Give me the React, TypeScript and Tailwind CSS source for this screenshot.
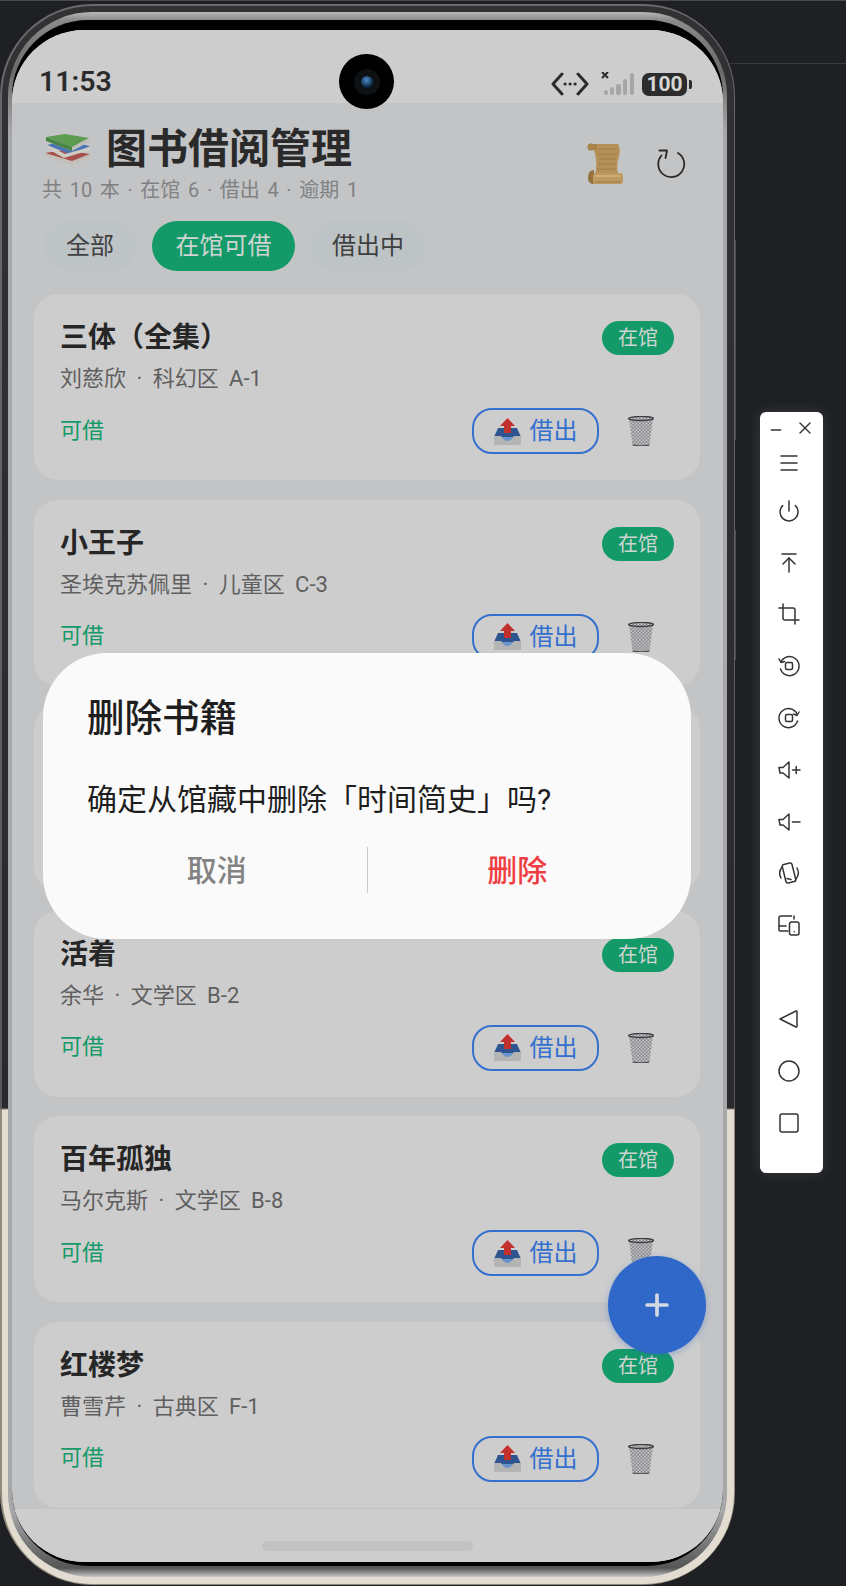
import React, { FC } from "react";
import { ArrowUpToLine, Circle, Crop, Menu, Minus, Plus, Power, Square, X } from "lucide-react";

interface Book {
  title: string;
  meta: string;
}

const topBooks: Book[] = [
  { title: "三体（全集）", meta: "刘慈欣 · 科幻区 A-1" },
  { title: "小王子", meta: "圣埃克苏佩里 · 儿童区 C-3" },
];

const bottomBooks: Book[] = [
  { title: "活着", meta: "余华 · 文学区 B-2" },
  { title: "百年孤独", meta: "马尔克斯 · 文学区 B-8" },
  { title: "红楼梦", meta: "曹雪芹 · 古典区 F-1" },
];

// no emoji font in the sandbox, so these four are drawn
const BooksEmoji = () => (
  <svg width="48" height="34" viewBox="14 9 48 34">
    <path d="M15 30 L34 27 L60 31 L42 41 Z" fill="#a8504c" />
    <path d="M15 30 L15 33 L42 42 L60 34 L60 31 L42 38 Z" fill="#c4bfb6" />
    <path d="M17 22 L35 18 L60 23 L42 32 Z" fill="#4a75b5" />
    <path d="M17 22 L18 26 L34 35 L60 27 L60 24 L35 31 Z" fill="#cfccc6" />
    <path d="M16 14 L35 11 L59 15 L42 24 Z" fill="#5c9c50" />
    <path d="M16 14 L16 18 L42 28 L59 19 L59 15 L42 24 Z" fill="#c0beb4" />
    <path d="M16 18 L42 28 L42 24 L16 14 Z" fill="#4a8445" />
  </svg>
);

const ScrollEmoji = () => (
  <svg width="36" height="43" viewBox="0 0 36 43">
    <path d="M6 2 L31 2 Q34 8 32 14 Q29 24 31 32 L8 34 Q11 20 7 8 Z" fill="#b59058" />
    <path d="M11 7 H29 M11 12 H30 M12 17 H29 M11 22 H28 M10 27 H28" stroke="#9a7a48" strokeWidth="0.8" />
    <circle cx="4" cy="5" r="3.5" fill="#96723e" />
    <path d="M1 2 H10 V8 H1 Z" fill="#a9834c" />
    <path d="M1 36 Q1 28 7 28 L7 42 Q1 42 1 36 Z" fill="#96723e" />
    <rect x="6" y="31" width="30" height="11" rx="3" fill="#bd9a62" />
    <path d="M8 34 H33" stroke="#d4b27a" strokeWidth="1.5" />
    <path d="M8 40 H34" stroke="#9c7b48" strokeWidth="1" />
  </svg>
);

const OutboxEmoji = () => (
  <svg width="27" height="27" viewBox="0 0 27 27" className="shrink-0">
    <path d="M0 19 L4 10 H23 L27 19 V27 H0 Z" fill="#2f5590" />
    <path d="M4 19 H23 Q19 25 13.5 25 Q8 25 4 19 Z" fill="#6c94cc" />
    <path d="M0 18 H7 Q10 23 13.5 23 Q17 23 20 18 H27 V27 H0 Z" fill="#b4b4b4" />
    <path d="M13.5 0 L21 8 H17 V15 H10 V8 H6 Z" fill="#c2302e" />
  </svg>
);

const TrashEmoji = () => (
  <svg width="26" height="30" viewBox="0 0 26 30">
    <defs>
      <pattern id="mesh" width="2.4" height="2.4" patternUnits="userSpaceOnUse" patternTransform="rotate(45)">
        <rect width="2.4" height="2.4" fill="#c4c4c6" />
        <path d="M0 0 H2.4 M0 0 V2.4" stroke="#66666a" strokeWidth="0.9" />
      </pattern>
    </defs>
    <path d="M1 2 H25 L21.5 29 Q13 30.5 4.5 29 Z" fill="url(#mesh)" />
    <path d="M4.5 29 Q13 30.5 21.5 29" stroke="#4c4c52" strokeWidth="1.2" fill="none" />
    <ellipse cx="13" cy="2.5" rx="12.5" ry="2" fill="none" stroke="#3c3c42" strokeWidth="1.4" />
  </svg>
);

const BookCard: FC<Book> = ({ title, meta }) => (
  <div className="h-[186px] shrink-0 rounded-[24px] bg-[#cdcdcd] px-[26px] pt-[27px]">
    <div className="flex h-[34px] items-center justify-between">
      <span className="text-[28px] font-bold leading-[34px] text-[#262626]">{title}</span>
      <span className="flex h-[34px] w-[72px] items-center justify-center rounded-full bg-[#149a68] text-[20px] text-[#d0d4d2]">
        在馆
      </span>
    </div>
    <p className="mt-[9px] h-[30px] text-[22px] leading-[30px] text-[#5f5f5f] [word-spacing:5px]">{meta}</p>
    <div className="mt-[14px] flex h-[46px] items-center justify-between pr-[20px]">
      <span className="pb-[2px] text-[22px] text-[#149a68]">可借</span>
      <div className="flex items-center gap-[29px]">
        <button className="flex h-[46px] w-[127px] items-center justify-center gap-[9px] rounded-[20px] border-2 border-[#3570cf] text-[24px] text-[#3570cf]">
          <OutboxEmoji />
          借出
        </button>
        <TrashEmoji />
      </div>
    </div>
  </div>
);

const SideIcon: FC<{ children: React.ReactNode }> = ({ children }) => (
  <div className="flex h-[51.8px] items-center justify-center pr-[5px] text-[#333333]">{children}</div>
);

const Glyph: FC<{ children: React.ReactNode }> = ({ children }) => (
  <svg width="24" height="24" viewBox="0 0 24 24" fill="none" stroke="currentColor" strokeWidth="1.5" strokeLinecap="round" strokeLinejoin="round">
    {children}
  </svg>
);

const SideToolbar = () => (
  <div className="absolute left-[760px] top-[412px] flex h-[761px] w-[63px] flex-col rounded-[6px] bg-white shadow-[0_0_14px_rgba(255,255,255,0.12)]">
    <div className="flex h-[29px] items-end justify-center gap-[11px] pb-[3px] text-[#333333]">
      <Minus size={16} strokeWidth={2} />
      <X size={20} strokeWidth={1.6} />
    </div>
    <div className="flex h-[44px] items-center justify-center pr-[5px] text-[#333333]">
      <Menu size={24} strokeWidth={1.5} />
    </div>
    <SideIcon>
      <Power size={24} strokeWidth={1.5} />
    </SideIcon>
    <SideIcon>
      <ArrowUpToLine size={24} strokeWidth={1.5} />
    </SideIcon>
    <SideIcon>
      <Crop size={24} strokeWidth={1.5} />
    </SideIcon>
    <SideIcon>
      <Glyph>
        <rect x="8.5" y="8.5" width="7" height="7" rx="1.5" />
        <path d="M4 8 A9.5 9.5 0 1 1 3.5 15" />
        <path d="M2 5 L4 8.5 L7.5 7.5" />
      </Glyph>
    </SideIcon>
    <SideIcon>
      <Glyph>
        <rect x="8.5" y="8.5" width="7" height="7" rx="1.5" />
        <path d="M20 8 A9.5 9.5 0 1 0 20.5 15" />
        <path d="M22 6 L20 9.5 L16.5 8" />
      </Glyph>
    </SideIcon>
    <SideIcon>
      <Glyph>
        <path d="M2 9.5 H6 L12 4 V20 L6 15 H3 Z" />
        <path d="M15.5 12 H23 M19.2 8.5 V15.5" />
      </Glyph>
    </SideIcon>
    <SideIcon>
      <Glyph>
        <path d="M2 9.5 H6 L12 4 V20 L6 15 H3 Z" />
        <path d="M15.5 12 H23" />
      </Glyph>
    </SideIcon>
    <SideIcon>
      <Glyph>
        <rect x="7" y="2.5" width="10" height="19" rx="2" transform="rotate(-14 12 12)" />
        <path d="M10 17.5 L14 18.5" />
        <path d="M5 6 A10 10 0 0 0 4 17 M19 18 A10 10 0 0 0 20 7" />
      </Glyph>
    </SideIcon>
    <SideIcon>
      <Glyph>
        <path d="M14.5 3 H4 A2 2 0 0 0 2 5 V17 A1 1 0 0 0 3 18 H11" />
        <path d="M2 13 H9" />
        <path d="M17 6 V3" />
        <rect x="12.5" y="9" width="9.5" height="13" rx="2" />
        <path d="M17.3 18.8 H17.3" />
      </Glyph>
    </SideIcon>
    <div className="h-[42px]" />
    <SideIcon>
      <Glyph>
        <path d="M3 12 L19 4 Q20 3.8 20 5 V19 Q20 20.2 19 20 Z" />
      </Glyph>
    </SideIcon>
    <SideIcon>
      <Circle size={24} strokeWidth={1.5} />
    </SideIcon>
    <SideIcon>
      <Square size={24} strokeWidth={1.5} />
    </SideIcon>
  </div>
);

const StatusBar = () => (
  <div className="flex h-[73px] shrink-0 items-end justify-between bg-[#cdcdcd] pb-[5px] pl-[27px] pr-[31px]">
    <span className="text-[28.5px] font-semibold leading-[32px] text-[#2c2c2c]">11:53</span>
    <div className="mb-[2px] flex items-center">
      <svg width="38" height="24" viewBox="0 0 38 24" fill="none" stroke="#2c2c2c" strokeWidth="3" strokeLinecap="round" strokeLinejoin="round">
        <path d="M11 2 L2 12 L11 22 M27 2 L36 12 L27 22" />
        <path d="M14 12 H14.2 M19 12 H19.2 M24 12 H24.2" />
      </svg>
      <svg width="38" height="24" viewBox="0 0 38 24" className="ml-[10px]">
        <path d="M3 0 L9 6 M9 0 L3 6" stroke="#2c2c2c" strokeWidth="2" />
        <rect x="5" y="18" width="4" height="5" rx="2" fill="#a6a6a6" />
        <rect x="11" y="15" width="4" height="8" rx="2" fill="#a6a6a6" />
        <rect x="17" y="12" width="5" height="11" rx="2" fill="#a6a6a6" />
        <rect x="24" y="7" width="4" height="16" rx="2" fill="#a6a6a6" />
        <rect x="31" y="1" width="4" height="22" rx="2" fill="#a6a6a6" />
      </svg>
      <div className="ml-[5px] flex h-[23px] w-[45px] items-center justify-center rounded-[7px] bg-[#2c2c2c] text-[21px] font-bold leading-[23px] text-[#d6d6d6]">
        100
      </div>
      <div className="ml-[2px] h-[9px] w-[3px] rounded-r-[2px] bg-[#2c2c2c]" />
    </div>
  </div>
);

const Header = () => (
  <div className="flex h-[191px] shrink-0 flex-col pl-[30px] pr-[37px] pt-[21px]">
    <div className="flex items-center justify-between">
      <div>
        <div className="flex h-[50px] items-center gap-[14px] pl-[2px]">
          <BooksEmoji />
          <h1 className="text-[41px] font-bold leading-[50px] text-[#2a2a2a]">图书借阅管理</h1>
        </div>
        <p className="mt-[3px] h-[26px] text-[20px] leading-[26px] text-[#808182] [word-spacing:2.7px]">共 10 本 · 在馆 6 · 借出 4 · 逾期 1</p>
      </div>
      <div className="flex items-center gap-[33px]">
        <ScrollEmoji />
        <svg width="30" height="30" viewBox="0 0 30 30" fill="none" stroke="#2a2a2a" strokeWidth="1.8" strokeLinecap="round" strokeLinejoin="round">
          <path d="M22 4 A13 13 0 1 1 5.5 6.5" />
          <path d="M3.5 1.5 H11 L9.5 9" />
        </svg>
      </div>
    </div>
    <div className="mt-[18px] flex gap-[15px] pl-[1px]">
      <span className="flex h-[50px] w-[94px] items-center justify-center rounded-full bg-[#bec3c6] text-[24px] text-[#404040]">全部</span>
      <span className="flex h-[50px] w-[143px] items-center justify-center rounded-full bg-[#149a68] text-[24px] text-[#d0d4d2]">在馆可借</span>
      <span className="flex h-[50px] w-[116px] items-center justify-center rounded-full bg-[#bec3c6] text-[24px] text-[#404040]">借出中</span>
    </div>
  </div>
);

const DeleteDialog = () => (
  <div className="absolute left-[31px] top-[623px] flex h-[286px] w-[648px] flex-col rounded-[64px] bg-[#fafafa] pl-[44px] pr-[44px] pt-[42px]">
    <h2 className="text-[37.5px] font-medium leading-[46px] text-[#1e1e1e]">删除书籍</h2>
    <p className="mt-[39px] text-[30px] leading-[40px] text-[#1e1e1e]">确定从馆藏中删除「时间简史」吗?</p>
    <div className="-mx-[44px] mt-[27px] flex items-center px-[24px]">
      <span className="flex h-[44px] flex-1 items-center justify-center text-[30px] font-medium text-[#838383]">取消</span>
      <span className="h-[46px] w-px bg-[#c9c9c9]" />
      <span className="flex h-[44px] flex-1 items-center justify-center text-[30px] font-medium text-[#ef3e42]">删除</span>
    </div>
  </div>
);

const PhoneScreen = () => (
  <div className="relative flex h-[1532px] w-[711px] flex-col overflow-hidden rounded-[72px] bg-[#c3c4c6]">
    <StatusBar />
    <Header />
    <div className="flex h-[1215px] shrink-0 flex-col gap-[19.6px] overflow-hidden pl-[22px] pr-[23px]">
      {topBooks.map((b) => (
        <BookCard key={b.title} {...b} />
      ))}
      {/* third card sits fully behind the dialog */}
      <div className="h-[186px] shrink-0 rounded-[24px] bg-[#cdcdcd]" />
      {bottomBooks.map((b) => (
        <BookCard key={b.title} {...b} />
      ))}
    </div>
    <div className="flex flex-1 items-end justify-center bg-[#cdcdcd] pb-[11px]">
      <div className="h-[10px] w-[211px] rounded-full bg-[#c2c2c2]" />
    </div>

    <DeleteDialog />

    {/* camera hole */}
    <div className="absolute left-[327px] top-[24px] flex h-[55px] w-[55px] items-center justify-center rounded-full bg-black">
      <div className="flex h-[26px] w-[26px] items-center justify-center rounded-full bg-[#0e1114]">
        <div className="h-[12px] w-[12px] rounded-full bg-[radial-gradient(circle_at_45%_35%,#4d8fcc,#0f3050_60%,#08101a)]" />
      </div>
    </div>

    <button className="absolute left-[596px] top-[1226px] flex h-[98px] w-[98px] items-center justify-center rounded-full bg-[#2f68c8] text-[#d3d8e2] shadow-[0_2px_6px_rgba(47,104,200,0.35)]">
      <Plus size={34} strokeWidth={2.6} />
    </button>
  </div>
);

export default function App() {
  return (
    <div className="relative h-[1586px] w-[846px] overflow-hidden bg-[#1e2024] font-[family-name:Roboto,'Noto_Sans_CJK_SC',sans-serif]">
      <div className="absolute left-0 top-0 h-px w-full bg-[#4a4b4e]" />
      <div className="absolute left-[730px] top-[63px] h-px w-[116px] bg-[#3a3b3e]" />
      <div className="absolute left-[734px] top-[240px] h-[200px] w-[2px] bg-[#4c4c4e]" />
      <div className="absolute left-[734px] top-[530px] h-[130px] w-[2px] bg-[#4c4c4e]" />

      {/* phone body */}
      <div className="absolute left-0 top-[4px] h-[1581px] w-[735px] rounded-[92px] bg-[linear-gradient(to_bottom,#6a6a6c_0,#58585a_1104px,#8f8a7c_1106px,#8f8a7c_100%)] p-[1.5px]">
        <div className="h-full w-full rounded-[90px] bg-[linear-gradient(to_bottom,#323234_0,#2a2a2c_1102px,#e2ddd0_1104px,#e2ddd0_100%)] p-[6.5px]">
          <div className="h-[1565px] w-[719px] rounded-[84px] bg-[linear-gradient(to_bottom,#b8b8b8_0,#8a8a8a_8px,#6a6a6a_60px,#a6a7a9_120px,#a6a7a9_1500px,#555_1556px,#c8c8c8_100%)] px-[4px] pt-[8px]">
            <div className="h-[1546px] w-[711px] rounded-[76px] bg-black pt-[10px]">
              <PhoneScreen />
            </div>
          </div>
        </div>
      </div>

      <SideToolbar />
    </div>
  );
}
